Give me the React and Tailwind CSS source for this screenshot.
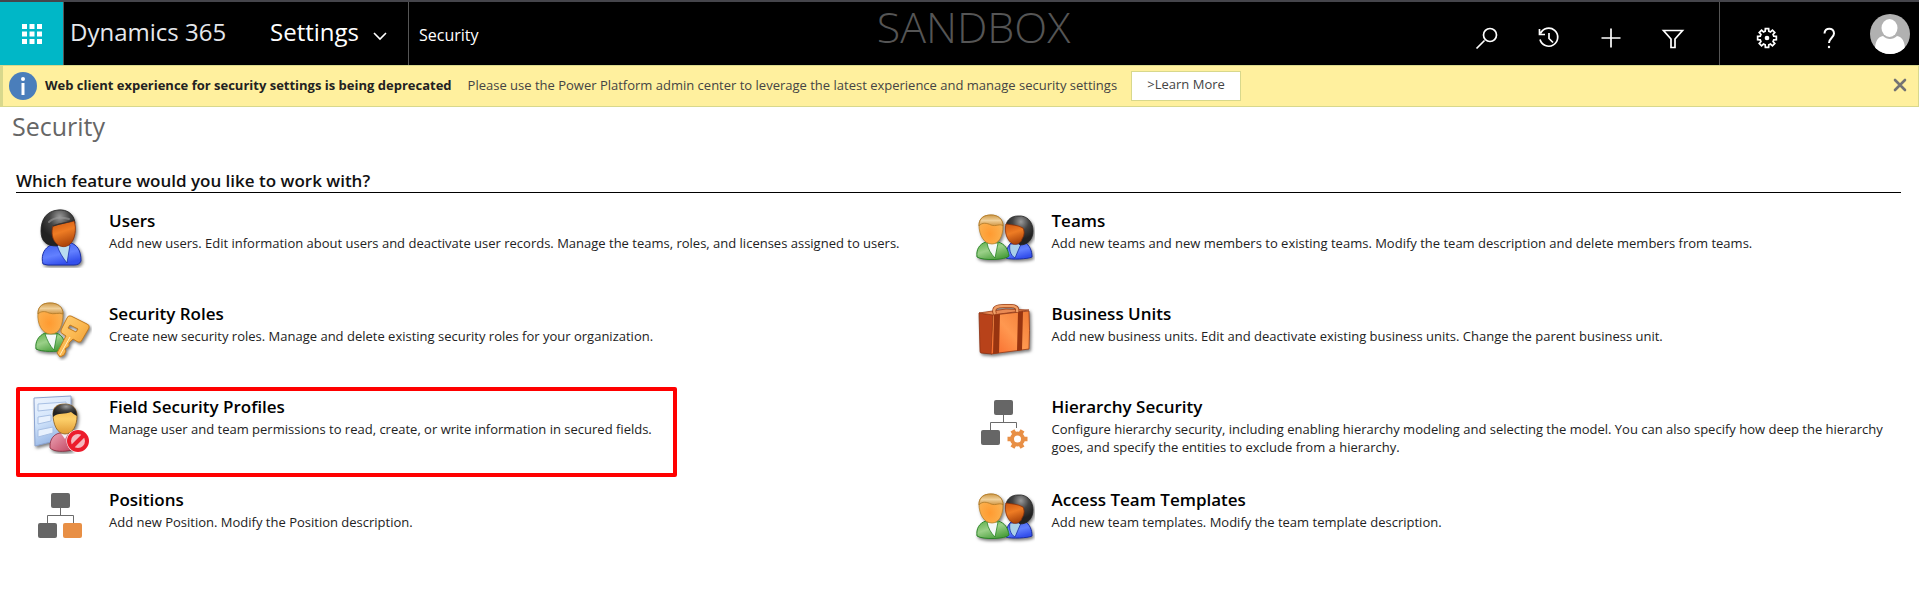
import React, { useState } from 'react'

// Degradados compartidos por los iconos
const Defs = () => (
  <svg width="0" height="0" className="absolute" aria-hidden="true">
    <defs>
      <linearGradient id="blond" x1="0" y1="0" x2="0" y2="1">
        <stop offset="0" stopColor="#cf9a48" /><stop offset="0.5" stopColor="#f0d09a" /><stop offset="1" stopColor="#d09440" />
      </linearGradient>
      <radialGradient id="fair" cx="0.45" cy="0.65" r="0.7">
        <stop offset="0" stopColor="#ff9a30" /><stop offset="0.6" stopColor="#fcac48" /><stop offset="1" stopColor="#ecb868" />
      </radialGradient>
      <linearGradient id="tan" x1="0" y1="0" x2="0.3" y2="1">
        <stop offset="0" stopColor="#cc5510" /><stop offset="0.5" stopColor="#ee7c24" /><stop offset="1" stopColor="#b0480c" />
      </linearGradient>
      <linearGradient id="yellow" x1="0" y1="0" x2="0" y2="1">
        <stop offset="0" stopColor="#efac3c" /><stop offset="0.5" stopColor="#fdd06a" /><stop offset="1" stopColor="#e09a34" />
      </linearGradient>
      <radialGradient id="black" cx="0.55" cy="0.2" r="0.6">
        <stop offset="0" stopColor="#9a9a9a" /><stop offset="0.5" stopColor="#444" /><stop offset="1" stopColor="#222" />
      </radialGradient>
      <linearGradient id="green" x1="0" y1="0" x2="0.6" y2="1">
        <stop offset="0" stopColor="#5cae48" /><stop offset="0.5" stopColor="#9ad088" /><stop offset="1" stopColor="#4ca03e" />
      </linearGradient>
      <linearGradient id="blue" x1="0" y1="0" x2="0.4" y2="1">
        <stop offset="0" stopColor="#3c5cea" /><stop offset="0.6" stopColor="#6280ff" /><stop offset="1" stopColor="#3450ec" />
      </linearGradient>
      <linearGradient id="pink" x1="0" y1="0" x2="1" y2="1">
        <stop offset="0" stopColor="#eda6b6" /><stop offset="1" stopColor="#c04460" />
      </linearGradient>
      <linearGradient id="paper" x1="0" y1="0" x2="0.4" y2="1">
        <stop offset="0" stopColor="#f0f5fd" /><stop offset="0.5" stopColor="#d3e5fb" /><stop offset="1" stopColor="#94b4e4" />
      </linearGradient>
      <linearGradient id="gold" x1="0" y1="0" x2="1" y2="1">
        <stop offset="0" stopColor="#ffd27a" /><stop offset="0.5" stopColor="#fbb850" /><stop offset="1" stopColor="#e8922a" />
      </linearGradient>
      <linearGradient id="leather" x1="0" y1="1" x2="1" y2="0">
        <stop offset="0" stopColor="#f8682a" /><stop offset="0.5" stopColor="#ff9850" /><stop offset="1" stopColor="#f07a34" />
      </linearGradient>
      <filter id="shade" x="-20%" y="-20%" width="150%" height="150%" colorInterpolationFilters="sRGB">
        <feDropShadow dx="1.5" dy="2" stdDeviation="1.5" floodColor="#000" floodOpacity="0.5" />
      </filter>
    </defs>
  </svg>
)

const Icon = ({ children }) => (
  <svg viewBox="0 0 60 60" className="w-[60px] h-[60px] shrink-0" aria-hidden="true">{children}</svg>
)

const UserIcon = () => (
  <Icon>
    <g filter="url(#shade)">
      <path d="M11 56C9 49 11 42 17 38L26 35L39 35C45 37 49 42 49 53C48 56 45 57 42 57H16Z" fill="url(#blue)" stroke="#1b2fa8" />
      <path d="M25 37L38 37L35 55C31 50 27 44 25 37Z" fill="#b9dcf0" stroke="#1b2fa8" strokeWidth="0.8" />
      <path d="M26 2C14 3 9 12 9 23C9 33 14 38 25 38L40 20L43 15C42 6 35 1 26 2Z" fill="url(#black)" stroke="#202020" strokeWidth="0.8" />
      <path d="M21 18C28 15 36 15 42 13C45 20 43 32 38 36C34 40 28 39 25 36C20 32 19 24 21 18Z" fill="url(#tan)" stroke="#8a2f08" strokeWidth="0.8" />
      <path d="M21 18C28 15 36 15 42 12" fill="none" stroke="#333" strokeWidth="1.2" />
      <path d="M17 14C22 9 30 9 37 11" fill="none" stroke="#999" strokeWidth="2" strokeLinecap="round" opacity="0.6" />
    </g>
  </Icon>
)

const RoleIcon = () => (
  <Icon>
    <g filter="url(#shade)">
      <path d="M4 48C3 41 6 35 13 32H24C31 34 33 40 33 49C24 51 10 51 4 48Z" fill="url(#green)" stroke="#2b8427" />
      <path d="M13 33L25 33L22 49C18 45 15 39 13 33Z" fill="#f4f8f8" stroke="#2b8427" strokeWidth="0.8" />
      <path d="M6 12C6 5 11 2 18 2C26 2 31 6 31 13C31 23 28 33 19 33C10 33 5 23 6 12Z" fill="url(#fair)" stroke="#b9822c" strokeWidth="0.8" />
      <path d="M6 13C6 5 11 2 18 2C26 2 31 6 31 13C27 11 22 14 17 12C13 10 9 10 6 13Z" fill="url(#blond)" stroke="#b07a28" strokeWidth="0.8" />
      <path d="M39 15Q36 14 35 17L29 29Q28 32 31 33L34 35L25 52L28 56L32 54L34 50L33 48L37 45L37 42L41 38L46 41Q49 42 50 39L57 27Q58 24 55 23ZM38 24L46 28L44 31L36 27Z" fill="url(#gold)" fillRule="evenodd" stroke="#c47a1c" strokeLinejoin="round" />
      <path d="M38 36L28 54" stroke="#fff0c0" strokeWidth="1" />
    </g>
  </Icon>
)

const FieldIcon = () => (
  <Icon>
    <g filter="url(#shade)">
      <path d="M2 4L39 2V43L3 52Z" fill="url(#paper)" stroke="#8ba3d0" />
      <path d="M6 10L34 8V14L6 17ZM6 23L19 21V27L6 30ZM6 36L21 33V39L6 43Z" fill="#e8f1fd" stroke="#a8c0e4" strokeWidth="1" />
      <path d="M18 52C18 45 22 40 28 39H36C41 42 41 50 40 56C32 58 22 58 18 54Z" fill="url(#pink)" stroke="#8c2438" strokeWidth="0.8" />
      <path d="M28 38L33 45L37 38Z" fill="#f3f0f8" />
      <path d="M21 20C21 13 25 10 33 10C41 10 45 15 45 22C45 31 41 40 33 40C25 40 21 30 21 20Z" fill="url(#yellow)" stroke="#8a5a18" strokeWidth="0.8" />
      <path d="M21 23C20 14 25 10 33 10C41 10 45 15 45 22C42 21 41 19 39 18C33 21 26 18 21 23Z" fill="url(#black)" />
    </g>
    <circle cx="46" cy="47" r="11.5" fill="#fff" />
    <circle cx="46" cy="47" r="9" fill="#f5b8be" stroke="#ec1c2c" strokeWidth="4" />
    <path d="M40 53L52 41" stroke="#ec1c2c" strokeWidth="4" />
  </Icon>
)

const TeamIcon = () => (
  <Icon>
    <g filter="url(#shade)">
      <path d="M31 50C31 42 33 36 38 34H49C55 37 57 43 57 49C53 51 36 52 31 50Z" fill="url(#blue)" stroke="#1b2fa8" />
      <path d="M35 36L46 36L40 50C35 47 34 41 35 36Z" fill="#a9cfe8" stroke="#1b2fa8" strokeWidth="0.8" />
      <path d="M43 8C52 7 58 14 58 23C58 31 53 37 45 37L31 17C32 12 36 8 43 8Z" fill="url(#black)" stroke="#222" strokeWidth="0.8" />
      <path d="M31 16C37 17 43 17 48 20C50 24 49 28 47 31C46 35 42 37 38 36C32 33 29 24 31 16Z" fill="url(#tan)" stroke="#8a2f08" strokeWidth="0.8" />
      <path d="M2 49C1 42 4 36 11 34H23C30 36 33 41 34 48C31 52 8 53 2 49Z" fill="url(#green)" stroke="#2b8427" />
      <path d="M12 35L23 35L20 50C16 46 13 41 12 35Z" fill="#f4f8f8" stroke="#2b8427" strokeWidth="0.8" />
      <path d="M4 17C4 10 9 7 16 7C23 7 28 11 28 18C28 28 24 36 17 36C9 36 4 27 4 17Z" fill="url(#fair)" stroke="#b9822c" strokeWidth="0.8" />
      <path d="M4 18C4 10 9 7 16 7C23 7 28 11 28 18C25 15 21 19 16 17C12 15 7 14 4 18Z" fill="url(#blond)" stroke="#b07a28" strokeWidth="0.8" />
    </g>
  </Icon>
)

const BusinessIcon = () => (
  <Icon>
    <g filter="url(#shade)">
      <path d="M4 12L18 14L17 53L6 52Q5 52 5 50Z" fill="#b8421a" stroke="#8a2e10" strokeWidth="0.8" />
      <path d="M4 12L31 8L54 9L18 14Z" fill="#e88a54" stroke="#9a3a14" strokeWidth="0.8" />
      <path d="M18 14L54 10Q55 30 54 48L16 53Z" fill="url(#leather)" stroke="#9a3a14" strokeWidth="0.8" />
      <path d="M19 14L25 13L24 52L18 53ZM43 11L48 10L47 49L42 50Z" fill="#983410" />
      <path d="M20 13C17 6 23 5 29 5H36C41 5 43 7 42 11" fill="none" stroke="#9c4018" strokeWidth="4" />
      <path d="M20 13C17 6 23 5 29 5H36C41 5 43 7 42 11" fill="none" stroke="#f0a068" strokeWidth="2.4" />
    </g>
  </Icon>
)

const Boxes = () => (
  <>
    <path d="M28.5 20V28.5M15.5 36V28.5H41.5V34" fill="none" stroke="#6b6b6b" />
    <rect x="19" y="6" width="19" height="15" rx="2" fill="#666" />
    <rect x="6" y="36" width="19" height="15" rx="2" fill="#666" />
  </>
)

const PositionIcon = () => (
  <Icon>
    <Boxes />
    <path d="M41.5 34V37" stroke="#6b6b6b" />
    <rect x="31" y="36" width="19" height="15" rx="2" fill="#e88f45" />
  </Icon>
)

const HierarchyIcon = () => (
  <Icon>
    <Boxes />
    <circle cx="42.5" cy="45" r="5.5" fill="none" stroke="#e88f45" strokeWidth="4" />
    <g stroke="#e88f45" strokeWidth="4.5">
      {[30, 90, 150, 210, 270, 330].map((a) => (
        <path key={a} d="M42.5 38.5V35" transform={`rotate(${a} 42.5 45)`} />
      ))}
    </g>
  </Icon>
)

const features = [
  { title: 'Users', icon: UserIcon, text: 'Add new users. Edit information about users and deactivate user records. Manage the teams, roles, and licenses assigned to users.' },
  { title: 'Teams', icon: TeamIcon, text: 'Add new teams and new members to existing teams. Modify the team description and delete members from teams.' },
  { title: 'Security Roles', icon: RoleIcon, text: 'Create new security roles. Manage and delete existing security roles for your organization.' },
  { title: 'Business Units', icon: BusinessIcon, text: 'Add new business units. Edit and deactivate existing business units. Change the parent business unit.' },
  { title: 'Field Security Profiles', icon: FieldIcon, marked: true, text: 'Manage user and team permissions to read, create, or write information in secured fields.' },
  { title: 'Hierarchy Security', icon: HierarchyIcon, text: 'Configure hierarchy security, including enabling hierarchy modeling and selecting the model. You can also specify how deep the hierarchy goes, and specify the entities to exclude from a hierarchy.' },
  { title: 'Positions', icon: PositionIcon, text: 'Add new Position. Modify the Position description.' },
  { title: 'Access Team Templates', icon: TeamIcon, text: 'Add new team templates. Modify the team template description.' },
]

const gearPath = Array.from({ length: 8 }, (_, i) => {
  const at = (deg, r) => {
    const t = ((i * 45 + deg) * Math.PI) / 180
    return `${(12 + r * Math.sin(t)).toFixed(2)} ${(12 - r * Math.cos(t)).toFixed(2)}`
  }
  return `${i ? 'L' : 'M'}${at(-15, 7)}L${at(-10, 9.5)}L${at(10, 9.5)}L${at(15, 7)}`
}).join('') + 'Z'

const actions = [
  { label: 'Search', d: 'M9.5 14.5L1.5 22.5M21.5 9a6.5 6.5 0 1 1-13 0a6.5 6.5 0 0 1 13 0' },
  { label: 'Recent', d: 'M3.5 7.5A9 9 0 1 1 3 13.5M2.5 3V8.5H8M12 7V12.5L16 16.5' },
  { label: 'New', d: 'M12 2.5V21.5M2.5 12H21.5' },
  { label: 'Filter', d: 'M2.5 4.5H21.5L14 13V21.5H10V13Z' },
]

const Glyph = ({ d, children }) => (
  <svg viewBox="0 0 24 24" className="w-6 h-6" fill="none" stroke="#fff" strokeWidth="1.7" aria-hidden="true">
    {d && <path d={d} />}
    {children}
  </svg>
)

function Header() {
  return (
    <header className="relative flex h-[65px] bg-black text-white border-t-2 border-[#45454b]">
      <button aria-label="Apps" className="w-16 bg-[#00b7c7] border-r border-[#555] flex items-center justify-center">
        <svg viewBox="0 0 20 20" className="w-5 h-5" fill="#fff" aria-hidden="true">
          {[0, 7.5, 15].map((y) => [0, 7.5, 15].map((x) => <rect key={`${x}-${y}`} x={x} y={y} width="5" height="5" />))}
        </svg>
      </button>
      <a href="#home" className="pl-1.5 w-[206px] text-2xl leading-[60px] text-gray-200">Dynamics 365</a>
      <button className="w-[138px] flex items-center justify-between pr-5 pb-1 text-2xl">
        Settings
        <svg viewBox="0 0 16 16" className="w-4 h-4 mt-2" fill="none" stroke="#fff" strokeWidth="1.6" aria-hidden="true"><path d="M2 5L8 11L14 5" /></svg>
      </button>
      <a href="#security" className="pl-2.5 border-l border-[#555] text-base leading-[66px]">Security</a>

      <div className="absolute inset-x-0 top-0 text-center pl-7 text-[43px] leading-[50px] font-light text-[#555] pointer-events-none">SANDBOX</div>

      <div className="ml-auto flex">
        <div className="flex items-center gap-[38px] pt-2 pr-[34px]">
          {actions.map((a) => <button key={a.label} aria-label={a.label}><Glyph d={a.d} /></button>)}
        </div>
        <div className="flex items-center border-l border-[#555] pl-[35px] pr-[9px]">
          <button aria-label="Settings menu" className="mt-2"><Glyph d={gearPath}><circle cx="12" cy="12" r="1.5" fill="#fff" /></Glyph></button>
          <button aria-label="Help" className="mt-2 ml-[38px]"><Glyph><path d="M7.5 7.5C7.5 1 17 1 17 7.5C17 11.5 12 12 12 17" strokeWidth="2" /><circle cx="12" cy="21" r="1.2" fill="#fff" stroke="none" /></Glyph></button>
          <button aria-label="Account" className="ml-[29px]">
            <svg viewBox="0 0 40 40" className="w-10 h-10" aria-hidden="true">
              <clipPath id="round"><circle cx="20" cy="20" r="20" /></clipPath>
              <g clipPath="url(#round)">
                <rect width="40" height="40" fill="#b1b1b1" />
                <path d="M5 36C5 27 8 23 13 22C17 26 23 26 27 22C32 23 35 27 35 36V40H5Z" fill="#fff" />
                <ellipse cx="19.5" cy="14" rx="8" ry="9" fill="#fff" />
              </g>
            </svg>
          </button>
        </div>
      </div>
    </header>
  )
}

function Notice({ onClose }) {
  return (
    <div className="flex items-center h-[42px] bg-[#fff09e] border border-l-3 border-[#d8d88c] text-[13px] text-[#444]">
      <svg viewBox="0 0 28 28" className="w-7 h-7 ml-1.5 shrink-0" aria-hidden="true">
        <circle cx="14" cy="14" r="14" fill="#4a7ebb" />
        <circle cx="14" cy="7" r="2" fill="#fff" />
        <path d="M14 11V23" stroke="#fff" strokeWidth="3" />
      </svg>
      <strong className="ml-2 font-bold text-[#222]">Web client experience for security settings is being deprecated</strong>
      <span className="ml-4">Please use the Power Platform admin center to leverage the latest experience and manage security settings</span>
      <button className="ml-3.5 h-[30px] w-[110px] pb-0.5 bg-white border border-[#d8d88c]">&gt;Learn More</button>
      <button aria-label="Close" onClick={onClose} className="ml-auto mr-2.5 mb-0.5">
        <svg viewBox="0 0 16 16" className="w-4 h-4" stroke="#737373" strokeWidth="2.6" strokeLinecap="round" aria-hidden="true"><path d="M3 3L13 13M13 3L3 13" /></svg>
      </button>
    </div>
  )
}

function Feature({ title, text, icon: Art, marked }) {
  return (
    <div className="relative flex h-[93px] px-4">
      <Art />
      <div className="ml-[17px]">
        <a href={`#${title}`} className="block text-[17px] leading-[26px] font-semibold text-black">{title}</a>
        <p className="text-[13px] leading-[18px] text-[#222]">{text}</p>
      </div>
      {marked && <div className="absolute -top-[7px] left-0 w-[661px] h-[90px] border-4 border-[#ff0000] rounded-xs pointer-events-none" />}
    </div>
  )
}

export default function App() {
  const [notice, setNotice] = useState(true)

  return (
    <div className="bg-white font-['Segoe_UI','Open_Sans',sans-serif]">
      <Defs />
      <Header />
      {notice && <Notice onClose={() => setNotice(false)} />}
      <main>
        <h1 className="pl-3 text-[25px] leading-[38px] text-[#666]">Security</h1>
        <section className="mt-6 ml-4 mr-[18px]">
          <h2 className="border-b border-black text-[17px] leading-[23px] font-semibold text-[#111]">Which feature would you like to work with?</h2>
          <div className="mt-[15px] grid grid-cols-2">
            {features.map((f) => <Feature key={f.title} {...f} />)}
          </div>
        </section>
      </main>
    </div>
  )
}
